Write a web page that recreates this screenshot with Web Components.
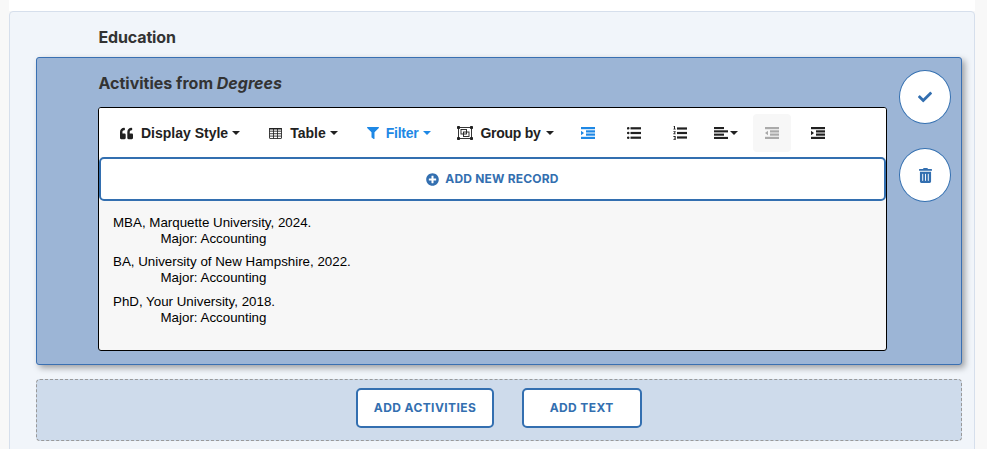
<!DOCTYPE html>
<html><head><meta charset="utf-8"><style>
html,body{margin:0;padding:0;height:449px;overflow:hidden;background:#f8f8f8}
</style></head><body>
<x-page>
  <x-section title="Education">
    <x-panel heading="Activities from " em="Degrees">
      <x-editor>
        <x-tool icon="quote" caret label="Display Style" gap="1"></x-tool>
        <x-tool icon="table" caret label="Table" gap="1"></x-tool>
        <x-tool icon="filter" caret label="Filter" active gap="-2" tight></x-tool>
        <x-tool icon="group" caret label="Group by" gap="1" tight></x-tool>
        <x-tool icon="indent" square active gap="8"></x-tool>
        <x-tool icon="ul" square gap="8"></x-tool>
        <x-tool icon="ol" square gap="8"></x-tool>
        <x-tool icon="align" caret square gap="8"></x-tool>
        <x-tool icon="outdent" square disabled gap="8"></x-tool>
        <x-tool icon="indent" square></x-tool>
        <x-record slot="records" line="MBA, Marquette University, 2024." sub="Major: Accounting"></x-record>
        <x-record slot="records" line="BA, University of New Hampshire, 2022." sub="Major: Accounting"></x-record>
        <x-record slot="records" line="PhD, Your University, 2018." sub="Major: Accounting"></x-record>
      </x-editor>
      <x-round slot="side" icon="check"></x-round>
      <x-round slot="side" icon="trash"></x-round>
    </x-panel>
    <x-dropzone>
      <x-add>ADD ACTIVITIES</x-add>
      <x-add>ADD TEXT</x-add>
    </x-dropzone>
  </x-section>
</x-page>
<script>
const LINES=(bars)=>bars.map(b=>`<rect x="${b[0]}" y="${b[1]}" width="${b[2]}" height="${b[3]}"/>`).join('');
const ICONS={
 check:['0 0 512 512','<path d="M173.898 439.404l-166.4-166.4c-9.997-9.997-9.997-26.206 0-36.204l36.203-36.204c9.997-9.998 26.207-9.998 36.204 0L192 312.69 432.095 72.596c9.997-9.997 26.207-9.997 36.204 0l36.203 36.204c9.997 9.997 9.997 26.206 0 36.204l-294.4 294.401c-9.998 9.997-26.207 9.997-36.204-.001z"/>'],
 trash:['0 0 448 512','<path d="M32 464a48 48 0 0 0 48 48h288a48 48 0 0 0 48-48V128H32zm272-256a16 16 0 0 1 32 0v224a16 16 0 0 1-32 0zm-96 0a16 16 0 0 1 32 0v224a16 16 0 0 1-32 0zm-96 0a16 16 0 0 1 32 0v224a16 16 0 0 1-32 0zM432 32H312l-9.4-18.7A24 24 0 0 0 281.1 0H166.8a23.72 23.72 0 0 0-21.4 13.3L136 32H16A16 16 0 0 0 0 48v32a16 16 0 0 0 16 16h416a16 16 0 0 0 16-16V48a16 16 0 0 0-16-16z"/>'],
 plus:['0 0 512 512','<path d="M256 8C119 8 8 119 8 256s111 248 248 248 248-111 248-248S393 8 256 8zm144 276c0 6.6-5.4 12-12 12h-92v92c0 6.6-5.4 12-12 12h-56c-6.6 0-12-5.4-12-12v-92h-92c-6.6 0-12-5.4-12-12v-56c0-6.6 5.4-12 12-12h92v-92c0-6.6 5.4-12 12-12h56c6.6 0 12 5.4 12 12v92h92c6.6 0 12 5.4 12 12v56z"/>'],
 filter:['0 0 512 512','<path d="M487.976 0H24.028C2.71 0-8.047 25.866 7.058 40.971L192 225.941V432c0 7.831 3.821 15.17 10.237 19.662l80 55.98C298.02 518.69 320 507.493 320 487.98V225.941l184.947-184.97C520.021 25.896 509.338 0 487.976 0z"/>'],
 quote:['0 0 512 512','<path d="M464 256h-80v-64c0-35.3 28.7-64 64-64h8c13.3 0 24-10.7 24-24V56c0-13.3-10.7-24-24-24h-8c-88.4 0-160 71.6-160 160v240c0 26.5 21.5 48 48 48h128c26.5 0 48-21.5 48-48V304c0-26.5-21.5-48-48-48zm-288 0H96v-64c0-35.3 28.7-64 64-64h8c13.3 0 24-10.7 24-24V56c0-13.3-10.7-24-24-24h-8C71.6 32 0 103.6 0 192v240c0 26.5 21.5 48 48 48h128c26.5 0 48-21.5 48-48V304c0-26.5-21.5-48-48-48z"/>'],
 table:['0 0 13 11','<path fill="none" stroke="currentColor" stroke-width=".85" d="M1 .5h11a.5.5 0 0 1 .5.5v9a.5.5 0 0 1-.5.5H1a.5.5 0 0 1-.5-.5V1A.5.5 0 0 1 1 .5zM.5 3.200h12M.5 5.700h12M.5 8.100h12M4.500 .5v10M8.500 .5v10"/><rect x="0" y="0" width="13" height="1.500" rx=".7"/>'],
 group:['0 0 16 14','<g fill="none" stroke="currentColor" stroke-width=".9"><rect x="1.500" y="1.500" width="13" height="11"/><rect x="4" y="3.500" width="5.500" height="4.500"/><rect x="6.500" y="6" width="5.500" height="4.500"/></g><rect x="0" y="0" width="3" height="3" rx=".8"/><rect x="13" y="0" width="3" height="3" rx=".8"/><rect x="0" y="11" width="3" height="3" rx=".8"/><rect x="13" y="11" width="3" height="3" rx=".8"/>'],
 indent:['0 0 14 12',LINES([[0,0,14,2.2],[5,3.300,9,2.200],[5,6.500,9,2.200],[0,9.800,14,2.200]])+'<path d="M0 3.700l3 2.300-3 2.300z"/>'],
 outdent:['0 0 14 12',LINES([[0,0,14,2.2],[5,3.300,9,2.200],[5,6.500,9,2.200],[0,9.800,14,2.200]])+'<path d="M3 3.700L0 6l3 2.300z"/>'],
 ul:['0 0 14 12','<circle cx="1.200" cy="1.300" r="1.300"/><circle cx="1.200" cy="6" r="1.300"/><circle cx="1.200" cy="10.700" r="1.300"/>'+LINES([[3.500,.2,10.500,2.200],[3.500,4.900,10.500,2.200],[3.500,9.600,10.500,2.200]])],
 ol:['0 0 14 14','<path d="M.8 0h1.200v2.800h.7v.8H.4v-.8h.6V1H.6zM.4 5.200h2.300v.9L1.500 7.500h1.200v.8H.4v-.8l1.300-1.500H.4zM.4 10h2.300v4H.4v-.8h1.400v-.7H.9v-.7h.9v-.9H.4z"/>'+LINES([[4,1.400,10,2.200],[4,5.900,10,2.200],[4,10.400,10,2.200]])],
 align:['0 0 14 12',LINES([[0,0,10,2.100],[0,3.300,14,2.100],[0,6.600,10,2.100],[0,9.900,14,2.100]])]
};
function icon(n,w,h){const [vb,body]=ICONS[n];return `<svg xmlns="http://www.w3.org/2000/svg" viewBox="${vb}" width="${w}" height="${h}" fill="currentColor" style="display:block;flex:none">${body}</svg>`}
function def(name,render){customElements.define(name,class extends HTMLElement{constructor(){super();this.attachShadow({mode:'open'})}connectedCallback(){this.shadowRoot.innerHTML=render(this)}})}
const INTER='Inter,"Liberation Sans",sans-serif';
const ARIAL='"Liberation Sans",Arial,sans-serif';
def('x-page',()=>`<style>:host{display:block;padding:11px 12px 0 9px;height:438px;background:linear-gradient(#fff 11px,transparent 11px) 9px 0/966px 11px no-repeat}</style><slot></slot>`);
def('x-section',e=>`<style>:host{display:block;box-sizing:border-box;height:460px;background:#f1f5fa;border:1px solid #d6dfec;border-radius:4px 4px 0 0;padding:15px 12px 0 26px}
h2{margin:0 0 10px 62.500px;font:700 16px/20px ${INTER};letter-spacing:-.15px;color:#333}</style><h2>${e.getAttribute('title')}</h2><slot></slot>`);
def('x-panel',e=>`<style>:host{display:flex;box-sizing:border-box;height:308px;background:#9cb5d6;border:1px solid #3a70b2;border-radius:3px;box-shadow:3px 3px 6px rgba(0,0,0,.35);padding:15px 10px 13px 61px;gap:12px}
.main{flex:1;min-width:0;display:flex;flex-direction:column}
h3{margin:0 0 14px .5px;font:700 16px/20px ${INTER};color:#333}
.side{display:flex;flex-direction:column;gap:24px;width:52px;flex:none;margin-top:-3px}</style>
<div class="main"><h3>${e.getAttribute('heading')}<em>${e.getAttribute('em')}</em></h3><slot></slot></div><div class="side"><slot name="side"></slot></div>`);
def('x-editor',()=>`<style>:host{display:flex;flex-direction:column;flex:1;background:#f7f7f7;border:1px solid #000;border-radius:3px;overflow:hidden}
.bar{display:flex;align-items:center;background:#fff;height:49px;padding:1px 0 0 7px;flex:none;box-sizing:border-box}
.new{box-sizing:border-box;height:44px;background:#fff;border:2px solid #336fb0;border-radius:5px;display:flex;align-items:center;justify-content:center;gap:6px;color:#336fb0;font:700 12px/14px ${INTER};letter-spacing:.2px;flex:none}
.rec{padding:14px 14px 0}
</style><div class="bar"><slot></slot></div><div class="new">${icon('plus',13,13)}<span>ADD NEW RECORD</span></div><div class="rec"><slot name="records"></slot></div>`);
def('x-tool',e=>{
 const a=e.hasAttribute('active'),d=e.hasAttribute('disabled'),s=e.hasAttribute('square'),c=e.hasAttribute('caret'),n=e.getAttribute('icon'),l=e.getAttribute('label'),t=e.hasAttribute('tight'),g=e.getAttribute('gap')||0;
 const col=d?'#aaa':a?'#1e88e5':'#212121';
 const ic={quote:[13,13],table:[13,11],filter:[12,12],group:[16,14],ol:[14,14]}[n]||[14,12];
 return `<style>:host{display:flex;align-items:center;justify-content:center;box-sizing:border-box;height:38px;color:${col};border-radius:4px;margin-right:${g}px;${d?'background:#f7f7f7;':''}${s?'width:38px;':'padding:0 14px;'}font:700 14px/16px ${ARIAL}}
 span{margin-left:${t?7:8}px;${t?'letter-spacing:-.25px;':''}}.c{width:0;height:0;border:4px solid transparent;border-top-color:currentColor;border-bottom:0;margin-left:${s?2:t?5:4}px}</style>${icon(n,ic[0],ic[1])}${l?`<span>${l}</span>`:''}${c?'<i class="c"></i>':''}`});
def('x-record',e=>`<style>:host{display:block;margin-bottom:8px;font:13.330px/16px ${ARIAL};color:#000}:host(:first-of-type){margin-bottom:7px}div+div{padding-left:47.500px}</style><div>${e.getAttribute('line')}</div><div>${e.getAttribute('sub')}</div>`);
def('x-round',e=>`<style>:host{box-sizing:border-box;display:flex;align-items:center;justify-content:center;width:52px;height:54px;border-radius:50%;background:#fff;border:1px solid #336fb0;color:#336fb0}</style>${e.getAttribute('icon')==='check'?icon('check',14,14):icon('trash',13,15)}`);
def('x-dropzone',()=>`<style>:host{display:flex;box-sizing:border-box;height:62px;margin-top:14px;background:#cedbeb;border:1px dashed #999;border-radius:4px;align-items:center;justify-content:center;gap:28px;padding-bottom:4px}</style><slot></slot>`);
def('x-add',e=>`<style>:host{display:flex;align-items:center;justify-content:center;box-sizing:border-box;height:40px;padding:0 15.500px;min-width:120px;background:#fff;border:2px solid #336fb0;border-radius:5px;color:#336fb0;font:700 12px/14px ${INTER};letter-spacing:.4px}</style><slot></slot>`);
</script>
</body></html>
